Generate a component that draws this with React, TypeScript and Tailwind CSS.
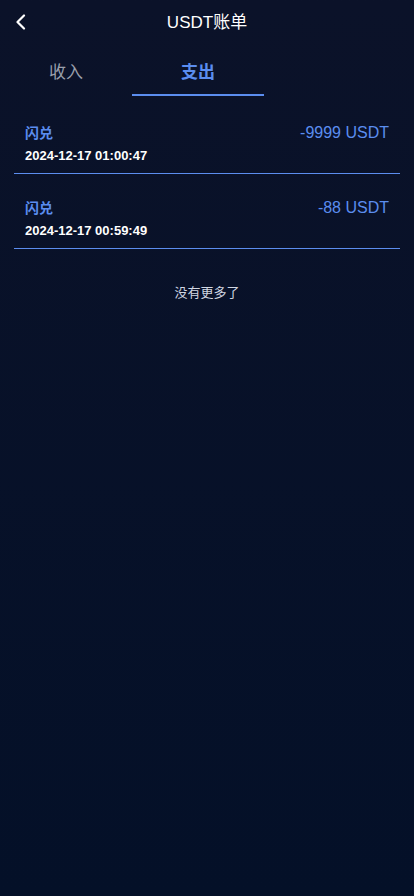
import React from "react";

const items = [
  { title: "闪兑", amount: "-9999 USDT", time: "2024-12-17 01:00:47" },
  { title: "闪兑", amount: "-88 USDT", time: "2024-12-17 00:59:49" },
];

export default function App() {
  return (
    <div
      className="w-[414px] h-[896px] bg-gradient-to-b from-[#0b1229] to-[#041028] text-white"
      style={{ fontFamily: '"Liberation Sans", Arial, "Noto Sans CJK SC", sans-serif' }}
    >
      <div className="relative h-[44px] flex items-center justify-center">
        <svg
          className="absolute left-[15px] top-[14px]"
          width="12"
          height="16"
          viewBox="0 0 12 16"
          fill="none"
        >
          <path d="M9 1.5 L2.5 8 L9 14.5" stroke="white" strokeWidth="2.2" strokeLinecap="round" strokeLinejoin="round" />
        </svg>
        <span className="text-[17px] leading-none text-white">USDT账单</span>
      </div>
      <div className="flex h-[55px]">
        <div className="w-[132px] flex items-center justify-center text-[17px] text-[#9aa0ad] pt-[2px]">收入</div>
        <div className="w-[132px] relative flex items-center justify-center text-[17px] font-bold text-[#5b8def] pt-[2px]">
          支出
          <div className="absolute left-0 right-0 bottom-[3px] h-[2px] bg-[#5b8def]" />
        </div>
      </div>
      <div className="px-[14px]">
        {items.map((it, i) => (
          <div key={i} className="h-[75px] border-b border-[#5b8def] px-[11px] pt-[24px]">
            <div className="flex justify-between items-center h-[20px]">
              <span className="text-[14px] font-bold text-[#5b8def]">{it.title}</span>
              <span className="text-[16px] text-[#5b8def]">{it.amount}</span>
            </div>
            <div className="mt-[5px] text-[13px] font-bold text-white leading-[16px]">{it.time}</div>
          </div>
        ))}
      </div>
      <div className="mt-[34px] text-center text-[13px] text-[#d0d6e2]">没有更多了</div>
    </div>
  );
}
